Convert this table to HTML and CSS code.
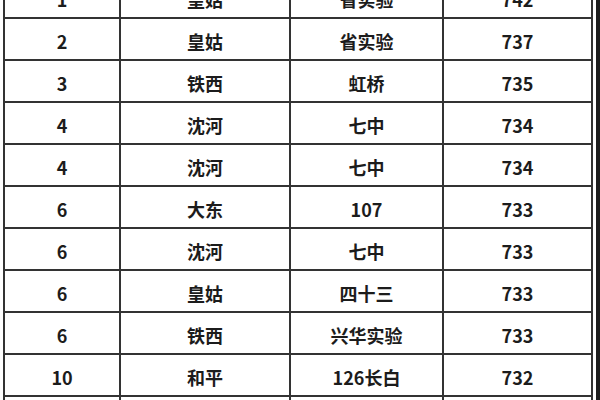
FILE: index.html
```html
<!DOCTYPE html>
<html lang="zh">
<head>
<meta charset="utf-8">
<title>成绩排名</title>
<link rel="stylesheet" href="styles.css">
</head>
<body>
<div class="page">
  <div class="table">
    <div class="cell">1</div><div class="cell">皇姑</div><div class="cell">省实验</div><div class="cell">742</div>
    <div class="cell">2</div><div class="cell">皇姑</div><div class="cell">省实验</div><div class="cell">737</div>
    <div class="cell">3</div><div class="cell">铁西</div><div class="cell">虹桥</div><div class="cell">735</div>
    <div class="cell">4</div><div class="cell">沈河</div><div class="cell">七中</div><div class="cell">734</div>
    <div class="cell">4</div><div class="cell">沈河</div><div class="cell">七中</div><div class="cell">734</div>
    <div class="cell">6</div><div class="cell">大东</div><div class="cell">107</div><div class="cell">733</div>
    <div class="cell">6</div><div class="cell">沈河</div><div class="cell">七中</div><div class="cell">733</div>
    <div class="cell">6</div><div class="cell">皇姑</div><div class="cell">四十三</div><div class="cell">733</div>
    <div class="cell">6</div><div class="cell">铁西</div><div class="cell">兴华实验</div><div class="cell">733</div>
    <div class="cell">10</div><div class="cell">和平</div><div class="cell">126长白</div><div class="cell">732</div>
    <div class="cell"></div><div class="cell"></div><div class="cell"></div><div class="cell"></div>
  </div>
  <div class="edge"></div>
</div>
</body>
</html>
```

FILE: styles.css
```css
html, body {
  margin: 0;
  padding: 0;
  background: #ffffff;
  overflow: hidden;
  width: 600px;
  height: 400px;
}

.page {
  display: flex;
  align-items: flex-start;
  padding-left: 3px;
  margin-top: -25px;
}

.table {
  display: grid;
  grid-template-columns: 116px 170px 153px 149px;
  grid-auto-rows: 42px;
  border-right: 2px solid #333333;
}

.cell {
  box-sizing: border-box;
  border-left: 2px solid #333333;
  border-top: 2px solid #333333;
  display: flex;
  align-items: center;
  justify-content: center;
  padding-top: 3px;
  font-family: "Noto Sans CJK SC", "Noto Sans", sans-serif;
  font-weight: 700;
  font-size: 18px;
  color: #1c1c1c;
}

.edge {
  margin-left: 3px;
  width: 4px;
  height: 470px;
  background: #1e1e1e;
}
```
